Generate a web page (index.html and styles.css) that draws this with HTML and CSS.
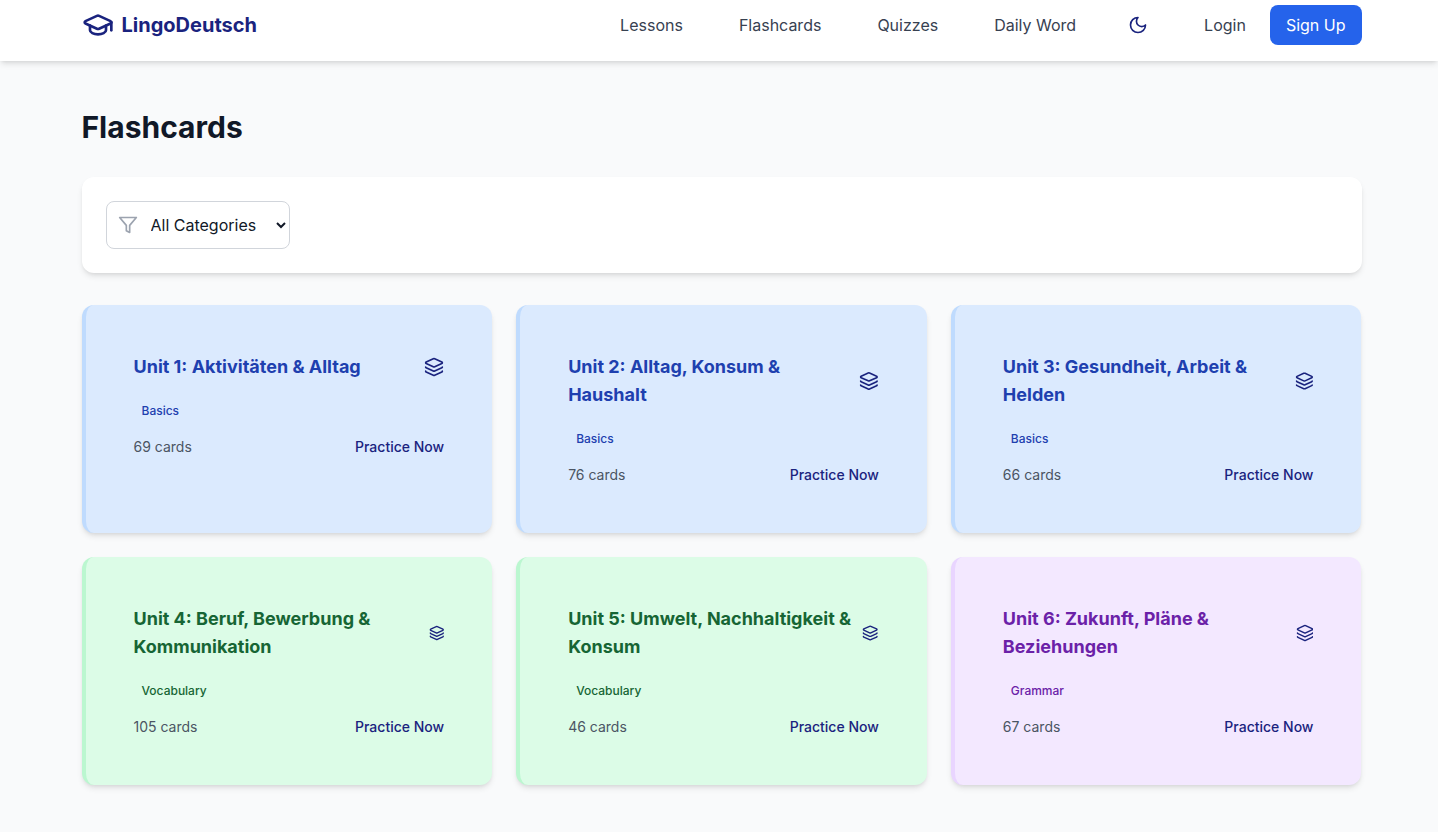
FILE: index.html
```html
<!DOCTYPE html>
<html lang="en">
<head>
<meta charset="utf-8">
<title>Flashcards - LingoDeutsch</title>
<link rel="stylesheet" href="styles.css">
</head>
<body>
<svg class="sprite" width="0" height="0" aria-hidden="true">
  <symbol id="layers" viewBox="0 0 24 24"><path d="M12.83 2.18a2 2 0 0 0-1.66 0L2.6 6.08a1 1 0 0 0 0 1.83l8.58 3.91a2 2 0 0 0 1.66 0l8.58-3.9a1 1 0 0 0 0-1.83z"/><path d="M2 12a1 1 0 0 0 .58.91l8.6 3.91a2 2 0 0 0 1.65 0l8.58-3.9A1 1 0 0 0 22 12"/><path d="M2 17a1 1 0 0 0 .58.91l8.6 3.91a2 2 0 0 0 1.65 0l8.58-3.9A1 1 0 0 0 22 17"/></symbol>
</svg>
<header class="navbar">
  <div class="navbar-inner">
    <a class="brand" href="#">
      <svg class="brand-icon" viewBox="0 0 24 24"><path d="M21.42 10.922a1 1 0 0 0-.019-1.838L12.83 5.18a2 2 0 0 0-1.66 0L2.6 9.08a1 1 0 0 0 0 1.832l8.57 3.908a2 2 0 0 0 1.66 0z"/><path d="M22 10v6"/><path d="M6 12.5V16a6 3 0 0 0 12 0v-3.5"/></svg>
      <span>LingoDeutsch</span>
    </a>
    <nav class="nav">
      <a class="nav-link" href="#">Lessons</a>
      <a class="nav-link" href="#">Flashcards</a>
      <a class="nav-link" href="#">Quizzes</a>
      <a class="nav-link" href="#">Daily Word</a>
      <button class="theme-btn" type="button" aria-label="Toggle theme">
        <svg class="moon-icon" viewBox="0 0 24 24"><path d="M12 3a6 6 0 0 0 9 9 9 9 0 1 1-9-9Z"/></svg>
      </button>
      <a class="nav-link login" href="#">Login</a>
      <a class="signup" href="#">Sign Up</a>
    </nav>
  </div>
</header>
<main class="page">
  <h1 class="page-title">Flashcards</h1>
  <section class="filter-panel">
    <div class="select-wrap">
      <svg class="filter-icon" viewBox="0 0 24 24"><polygon points="22 3 2 3 10 12.46 10 19 14 21 14 12.46 22 3"/></svg>
      <select class="category-select">
        <option>All Categories</option>
        <option>Basics</option>
        <option>Vocabulary</option>
        <option>Grammar</option>
      </select>
    </div>
  </section>
  <section class="card-grid">
    <article class="card card-blue">
      <div class="card-head"><h2 class="card-title">Unit 1: Aktivitäten &amp; Alltag</h2><svg class="layers-icon"><use href="#layers"/></svg></div>
      <span class="badge">Basics</span>
      <div class="card-foot"><span class="count">69 cards</span><a class="practice" href="#">Practice Now</a></div>
    </article>
    <article class="card card-blue">
      <div class="card-head"><h2 class="card-title">Unit 2: Alltag, Konsum &amp; Haushalt</h2><svg class="layers-icon"><use href="#layers"/></svg></div>
      <span class="badge">Basics</span>
      <div class="card-foot"><span class="count">76 cards</span><a class="practice" href="#">Practice Now</a></div>
    </article>
    <article class="card card-blue">
      <div class="card-head"><h2 class="card-title">Unit 3: Gesundheit, Arbeit &amp; Helden</h2><svg class="layers-icon"><use href="#layers"/></svg></div>
      <span class="badge">Basics</span>
      <div class="card-foot"><span class="count">66 cards</span><a class="practice" href="#">Practice Now</a></div>
    </article>
    <article class="card card-green">
      <div class="card-head"><h2 class="card-title">Unit 4: Beruf, Bewerbung &amp; Kommunikation</h2><svg class="layers-icon"><use href="#layers"/></svg></div>
      <span class="badge">Vocabulary</span>
      <div class="card-foot"><span class="count">105 cards</span><a class="practice" href="#">Practice Now</a></div>
    </article>
    <article class="card card-green">
      <div class="card-head"><h2 class="card-title">Unit 5: Umwelt, Nachhaltigkeit &amp; Konsum</h2><svg class="layers-icon"><use href="#layers"/></svg></div>
      <span class="badge">Vocabulary</span>
      <div class="card-foot"><span class="count">46 cards</span><a class="practice" href="#">Practice Now</a></div>
    </article>
    <article class="card card-purple">
      <div class="card-head"><h2 class="card-title">Unit 6: Zukunft, Pläne &amp; Beziehungen</h2><svg class="layers-icon"><use href="#layers"/></svg></div>
      <span class="badge">Grammar</span>
      <div class="card-foot"><span class="count">67 cards</span><a class="practice" href="#">Practice Now</a></div>
    </article>
  </section>
</main>
</body>
</html>
```
FILE: styles.css
```css
* { box-sizing: border-box; }
html, body { margin: 0; }
body {
  min-height: 832px;
  background: #f9fafb;
  color: #111827;
  font-family: Inter, "Liberation Sans", sans-serif;
  font-size: 16px;
  line-height: 24px;
}
a { text-decoration: none; color: inherit; }
svg {
  fill: none;
  stroke: currentColor;
  stroke-width: 2;
  stroke-linecap: round;
  stroke-linejoin: round;
}
.sprite { position: absolute; }

.navbar {
  height: 61px;
  background: #fff;
  box-shadow: 0 4px 6px -1px rgba(0,0,0,.1), 0 2px 4px -2px rgba(0,0,0,.1);
  padding: 5px 76.5px 0 81.5px;
}
.navbar-inner { display: flex; justify-content: space-between; align-items: center; height: 40px; }
.brand {
  display: flex; align-items: center; gap: 8px;
  color: #1a237e; font-size: 20px; line-height: 28px; font-weight: 700;
}
.brand-icon { width: 32px; height: 32px; }
.nav { display: flex; align-items: center; }
.nav-link { color: #374151; padding: 0 16px; margin-right: 24px; }
.nav-link.login { margin-right: 8px; }
.theme-btn {
  display: flex; padding: 8px; margin: 0 32px 0 4px;
  border: 0; background: none; color: #1a237e;
}
.moon-icon { width: 20px; height: 20px; }
.signup {
  display: block; height: 40px; padding: 8px 16px;
  background: #2563eb; color: #fff; border-radius: 8px;
}

.page { padding: 48px 76.5px 32px 81.5px; }
.page-title { margin: 0 0 32px; font-size: 30px; line-height: 36px; font-weight: 700; color: #111827; }

.filter-panel {
  background: #fff; border-radius: 12px; padding: 24px; margin-bottom: 32px;
  box-shadow: 0 4px 6px -1px rgba(0,0,0,.1), 0 2px 4px -2px rgba(0,0,0,.1);
}
.select-wrap { position: relative; width: 184px; height: 48px; }
.filter-icon { position: absolute; left: 12px; top: 14px; width: 20px; height: 20px; color: #9ca3af; pointer-events: none; }
.category-select {
  width: 184px; height: 48px; padding: 0 8px 0 40px;
  border: 1px solid #d1d5db; border-radius: 8px; background: #fff;
  font: 16px/24px Inter, "Liberation Sans", sans-serif; color: #111827;
}

.card-grid { display: grid; grid-template-columns: repeat(3, 1fr); gap: 24px; }
.card {
  min-height: 228px; padding: 48px; border-left: 4px solid; border-radius: 12px;
  box-shadow: 0 4px 6px -1px rgba(0,0,0,.1), 0 2px 4px -2px rgba(0,0,0,.1);
}
.card-blue { background: #dbeafe; border-color: #bfdbfe; --ink: #1e40af; }
.card-green { background: #dcfce7; border-color: #bbf7d0; --ink: #166534; }
.card-purple { background: #f3e8ff; border-color: #e9d5ff; --ink: #6b21a8; }
.card-head { display: flex; justify-content: space-between; align-items: center; margin-bottom: 16px; }
.card-title { margin: 0; font-size: 18px; line-height: 28px; font-weight: 700; color: var(--ink); }
.layers-icon { width: 20px; height: 20px; color: #1a237e; }
.badge {
  display: block; width: max-content; margin-bottom: 12px; padding: 6px 8px;
  font-size: 12px; line-height: 16px; font-weight: 500; color: var(--ink);
}
.card-foot { display: flex; justify-content: space-between; align-items: center; font-size: 14px; line-height: 20px; }
.count { color: #4b5563; }
.practice { color: #1a237e; font-weight: 500; }
```
